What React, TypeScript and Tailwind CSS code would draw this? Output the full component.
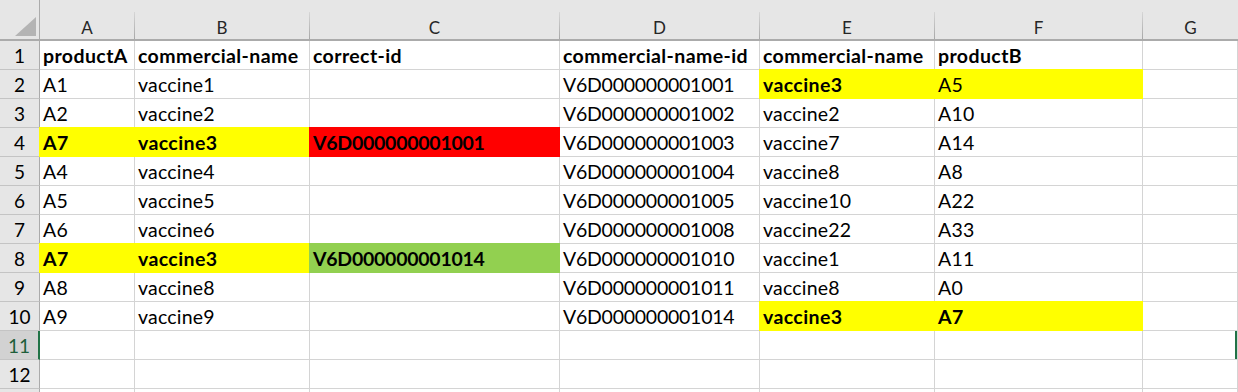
type Cell = { v?: string; bold?: boolean; fill?: string };

const columns = ["A", "B", "C", "D", "E", "F", "G"];

const Y = "#ffff00";
const R = "#ff0000";
const G = "#92d050";

const b = (v: string, fill?: string): Cell => ({ v, bold: true, fill });
const p = (v?: string, fill?: string): Cell => ({ v, fill });
const blank = (): Cell[] => [p(), p(), p(), p(), p(), p(), p()];

// sheet contents, rows 1..13, columns A..G
const rows: Cell[][] = [
  [b("productA"), b("commercial-name"), b("correct-id"), b("commercial-name-id"), b("commercial-name"), b("productB"), p()],
  [p("A1"), p("vaccine1"), p(), p("V6D000000001001"), b("vaccine3", Y), p("A5", Y), p()],
  [p("A2"), p("vaccine2"), p(), p("V6D000000001002"), p("vaccine2"), p("A10"), p()],
  [b("A7", Y), b("vaccine3", Y), b("V6D000000001001", R), p("V6D000000001003"), p("vaccine7"), p("A14"), p()],
  [p("A4"), p("vaccine4"), p(), p("V6D000000001004"), p("vaccine8"), p("A8"), p()],
  [p("A5"), p("vaccine5"), p(), p("V6D000000001005"), p("vaccine10"), p("A22"), p()],
  [p("A6"), p("vaccine6"), p(), p("V6D000000001008"), p("vaccine22"), p("A33"), p()],
  [b("A7", Y), b("vaccine3", Y), b("V6D000000001014", G), p("V6D000000001010"), p("vaccine1"), p("A11"), p()],
  [p("A8"), p("vaccine8"), p(), p("V6D000000001011"), p("vaccine8"), p("A0"), p()],
  [p("A9"), p("vaccine9"), p(), p("V6D000000001014"), b("vaccine3", Y), b("A7", Y), p()],
  blank(),
  blank(),
  blank(),
];

const SELECTED_ROW = 11;
const VISIBLE_LABELS = 12;

function ColumnHeader({ label, last }: { label: string; last?: boolean }) {
  return (
    <div className="flex h-[41px] items-stretch border-b-2 border-[#ababab] bg-[#e6e6e6]">
      <div className="flex flex-1 items-end justify-center pb-[3px] text-[17px] leading-none text-[#262626]">
        {label}
      </div>
      {!last && <div className="mt-[12px] w-px bg-gradient-to-b from-[#d6d6d6] to-[#a8a8a8]" />}
    </div>
  );
}

function RowHeader({ n }: { n: number }) {
  const selected = n === SELECTED_ROW;
  return (
    <div
      className={
        selected
          ? "flex h-[29px] items-end justify-center border-b border-r-2 border-b-[#c4c4c4] border-r-[#217346] bg-[#d2d2d2] pb-[4px] text-[19px] leading-none text-[#1e5e3a]"
          : "flex h-[29px] items-end justify-center border-b border-r border-b-[#c4c4c4] border-r-[#ababab] bg-[#e6e6e6] pb-[4px] text-[19px] leading-none text-black"
      }
    >
      {n <= VISIBLE_LABELS ? n : null}
    </div>
  );
}

function SheetCell({ cell, edge }: { cell: Cell; edge: boolean }) {
  const fill = cell.fill;
  const isId = cell.v?.startsWith("V6D");
  const tracking = isId ? "tracking-[-0.25px] " : cell.bold ? "tracking-[0.4px] " : "tracking-[0.2px] ";
  return (
    <div
      className={
        "flex h-[29px] items-end overflow-visible whitespace-nowrap border-b border-r border-[#d4d4d4] pb-[4px] pl-[3px] text-[19.5px] leading-none text-black " +
        tracking +
        (cell.bold ? "font-bold " : "") +
        (edge ? "shadow-[inset_-2px_0_0_#217346] " : "")
      }
      style={
        fill
          ? {
              backgroundColor: fill,
              borderColor: fill,
              boxShadow: `0 -1px 0 ${fill}, -1px 0 0 ${fill}, -1px -1px 0 ${fill}`,
            }
          : undefined
      }
    >
      {cell.v}
    </div>
  );
}

export default function App() {
  return (
    <div className="h-[392px] w-[1238px] overflow-hidden bg-white font-['Lato','Liberation_Sans',sans-serif]">
      <div className="grid grid-cols-[40px_95px_175px_250px_200px_175px_208px_1fr]">
        {/* corner with select-all triangle */}
        <div className="relative h-[41px] border-b-2 border-r border-[#ababab] bg-[#e6e6e6]">
          <svg className="absolute bottom-[3px] right-[3px]" width="21" height="19" viewBox="0 0 21 19">
            <polygon points="21,0 21,19 0,19" fill="#b4b4b4" />
          </svg>
        </div>
        {columns.map((c, i) => (
          <ColumnHeader key={c} label={c} last={i === columns.length - 1} />
        ))}

        {rows.map((row, r) => (
          <div key={r} className="contents">
            <RowHeader n={r + 1} />
            {row.map((cell, c) => (
              <SheetCell key={c} cell={cell} edge={r + 1 === SELECTED_ROW && c === row.length - 1} />
            ))}
          </div>
        ))}
      </div>
    </div>
  );
}
